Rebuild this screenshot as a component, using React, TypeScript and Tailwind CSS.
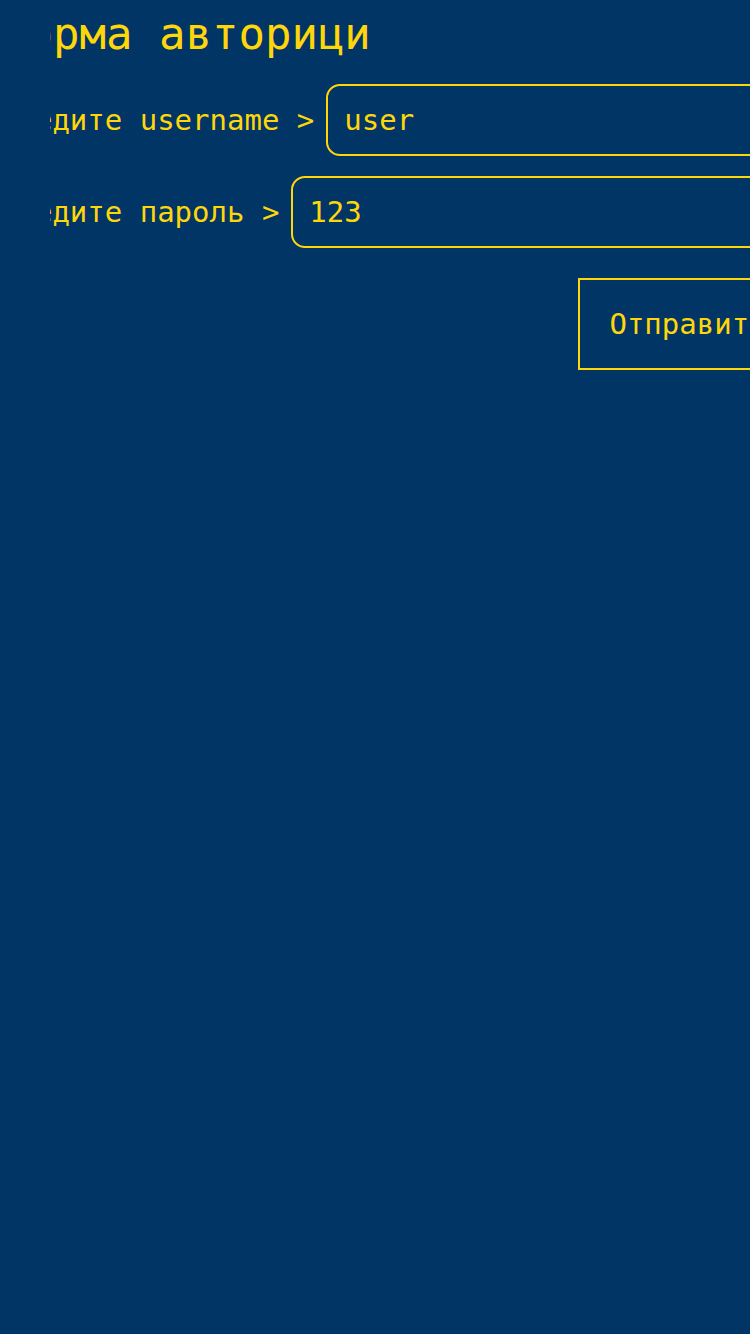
import { useState } from "react";

type FieldProps = {
  id: string;
  label: string;
  value: string;
  onChange: (value: string) => void;
};

function Field({ id, label, value, onChange }: FieldProps) {
  return (
    <div className="flex items-center gap-3">
      <label htmlFor={id} className="shrink-0 whitespace-nowrap">
        {label} &gt;
      </label>
      <input
        id={id}
        type="text"
        value={value}
        onChange={(event) => onChange(event.target.value)}
        className="h-18 min-w-0 flex-1 rounded-[14px] border-2 border-[#ffd60a] bg-transparent px-4 outline-none"
      />
    </div>
  );
}

export default function App() {
  const [username, setUsername] = useState("user");
  const [password, setPassword] = useState("123");

  return (
    <div className="min-h-screen bg-[#003566] pl-[50px] font-['DejaVu_Sans_Mono',monospace] text-[29px] leading-9 text-[#ffd60a]">
      <main className="overflow-hidden">
        <form
          className="-mr-12 -ml-[50px] flex flex-col gap-5"
          onSubmit={(event) => event.preventDefault()}
        >
          <h1 className="pt-1 text-[44px] leading-15 whitespace-nowrap">Форма авторици</h1>
          <Field id="username" label="Введите username" value={username} onChange={setUsername} />
          <Field id="password" label="Введите пароль" value={password} onChange={setPassword} />
          <button
            type="submit"
            className="mt-[10px] h-23 w-[220px] self-end border-2 border-[#ffd60a] whitespace-nowrap"
          >
            Отправить
          </button>
        </form>
      </main>
    </div>
  );
}
